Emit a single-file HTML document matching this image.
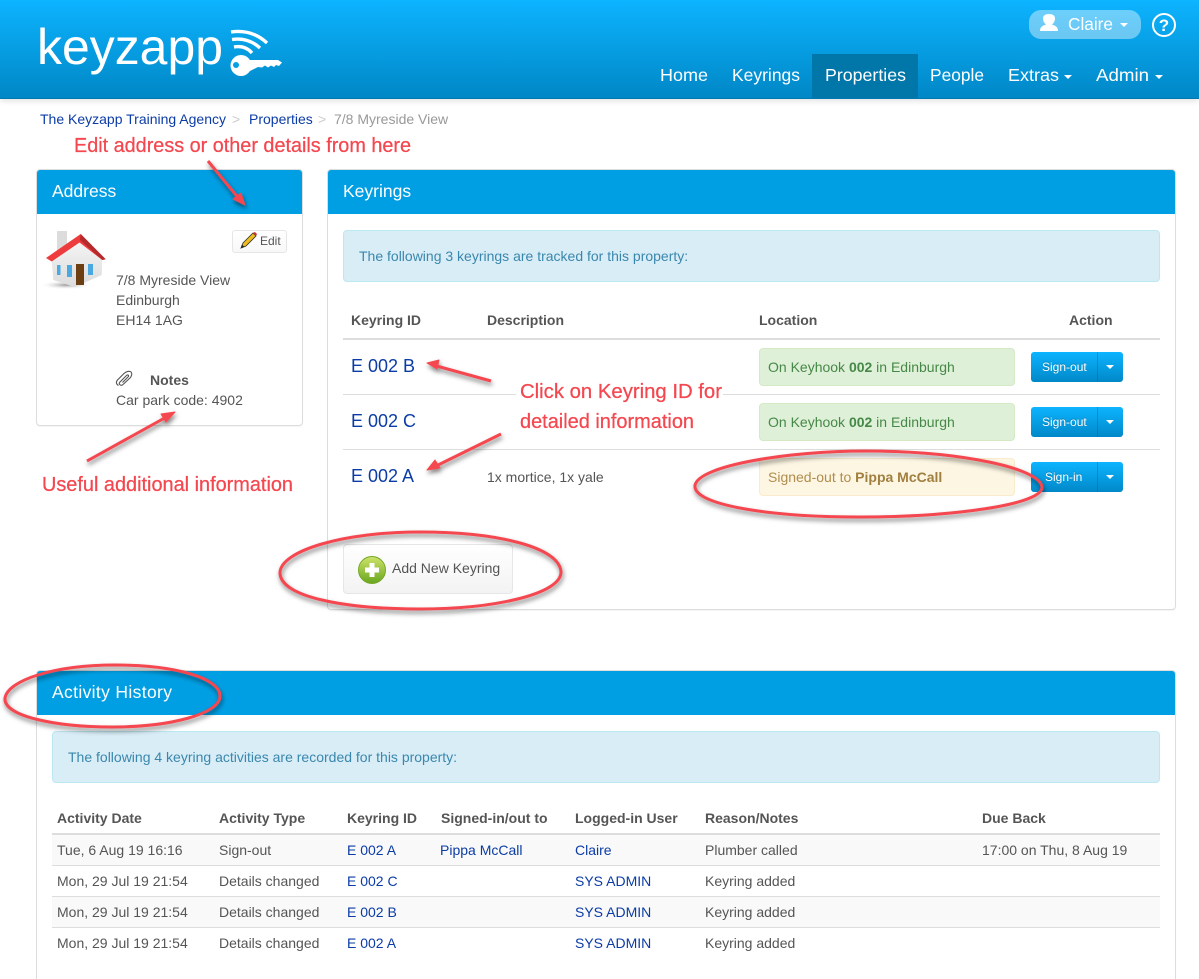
<!DOCTYPE html>
<html style="height:979px;overflow:hidden"><head><meta charset="utf-8"><title>Keyzapp</title>
<style>
html,body{margin:0;padding:0;background:#fff}
body{position:relative;width:1199px;height:979px;overflow:hidden;font-family:"Liberation Sans",sans-serif;font-size:14px;color:#555}
.a{position:absolute;box-sizing:border-box}
.t{position:absolute;white-space:nowrap;line-height:20px;margin-top:-10px}
.b{font-weight:bold}
.l{color:#0b3ca6}
.panel{position:absolute;box-sizing:border-box;background:#fff;border:1px solid #ddd;border-radius:4px;box-shadow:0 1px 1px rgba(0,0,0,.05)}
.head{position:absolute;box-sizing:border-box;background:#009fe3;color:#fff;font-size:17.5px;line-height:42px;padding-left:15px;height:44px}
.alert{position:absolute;box-sizing:border-box;background:#d9edf7;border:1px solid #bce8f1;border-radius:4px;color:#3a87ad;line-height:50px;padding-left:15px;height:52px}
.loc{position:absolute;box-sizing:border-box;left:759px;width:256px;height:38px;border-radius:4px;line-height:36px;padding-left:8px;border:1px solid #d6e9c6;background:#dff0d8;color:#468847}
.loc.w{border-color:#faebcc;background:#fdf6e3;color:#b08d4c}
.loc.w b{color:#a07f3f}
.btn{position:absolute;box-sizing:border-box;left:1031px;width:92px;height:30px;border-radius:3px;background:linear-gradient(#0db4ff,#0088c8);color:#fff;font-size:12px;line-height:30px;text-shadow:0 -1px 0 rgba(0,0,0,.2)}
.btn i{position:absolute;left:66px;top:0;width:1px;height:30px;background:rgba(0,90,140,.35)}
.btn u{position:absolute;left:75px;top:13px;width:0;height:0;border:4px solid transparent;border-top-color:#fff;border-bottom:0}
.line{position:absolute;height:1px;background:#ddd}
.row{position:absolute;left:52px;width:1108px;height:30px}
</style></head>
<body>

<!-- Header -->
<div class="a" style="left:0;top:0;width:1199px;height:99px;background:linear-gradient(#0db4ff,#0087c6);border-bottom:1px solid #0079b2;box-shadow:0 2px 6px rgba(0,0,0,.12)"></div>
<div class="a" style="left:812px;top:54px;width:106px;height:44px;background:#0076a9"></div>
<div class="a" style="left:1029px;top:10px;width:112px;height:29px;border-radius:12px;background:rgba(255,255,255,.4)"></div>

<svg class="a" style="left:0;top:0" width="1199" height="99" viewBox="0 0 1199 99">
  <text x="37" y="64" font-family="Liberation Sans" font-size="50" fill="#fff" textLength="186" lengthAdjust="spacingAndGlyphs">keyzapp</text>
  <g fill="none" stroke="#fff" stroke-width="3.4">
    <path d="M231 32 Q252 29 267 43"/>
    <path d="M232 39.500 Q248 37 260 48"/>
    <path d="M234 47 Q245 45 252 53"/>
  </g>
  <circle cx="241" cy="65.500" r="10.500" fill="#fff"/>
  <circle cx="236" cy="65" r="3" fill="#02a0e4"/>
  <path d="M250 60 H278 L282 62.500 L279 66 L276 65 L274 67 L271 65.500 L268 67.500 L265 65.500 L262 67.500 L258 67 L250 71 Z" fill="#fff"/>
  <g font-family="Liberation Sans" font-size="17.500" fill="#fff">
    <text x="660" y="81" textLength="48" lengthAdjust="spacingAndGlyphs">Home</text>
    <text x="732" y="81" textLength="68" lengthAdjust="spacingAndGlyphs">Keyrings</text>
    <text x="825" y="81" textLength="81" lengthAdjust="spacingAndGlyphs">Properties</text>
    <text x="930" y="81" textLength="54" lengthAdjust="spacingAndGlyphs">People</text>
    <text x="1008" y="81" textLength="51" lengthAdjust="spacingAndGlyphs">Extras</text>
    <text x="1096" y="81" textLength="53" lengthAdjust="spacingAndGlyphs">Admin</text>
    <text x="1068" y="30" textLength="45" lengthAdjust="spacingAndGlyphs">Claire</text>
  </g>
  <path d="M1064 75 h8 l-4 4z M1155 75 h8 l-4 4z M1120 23 h8 l-4 4z" fill="#fff"/>
  <path d="M1040 31 C1040 26 1044 25.500 1046 24.500 C1044 23 1043 21 1043 18.500 C1043 15.500 1045.500 14 1049 14 C1052.500 14 1055 15.500 1055 18.500 C1055 21 1054 23 1052 24.500 C1054 25.500 1058 26 1058 31 Z" fill="#fff"/>
  <circle cx="1164" cy="25" r="11" fill="none" stroke="#fff" stroke-width="2"/>
  <text x="1164" y="31" font-family="Liberation Sans" font-weight="bold" font-size="17" fill="#fff" text-anchor="middle">?</text>
</svg>

<!-- Breadcrumb -->
<span class="t l" style="left:40px;top:119px">The Keyzapp Training Agency</span>
<span class="t" style="left:232px;top:119px;color:#ccc">&gt;</span>
<span class="t l" style="left:249px;top:119px">Properties</span>
<span class="t" style="left:318px;top:119px;color:#ccc">&gt;</span>
<span class="t" style="left:334px;top:119px;color:#999">7/8 Myreside View</span>

<!-- Address panel -->
<div class="panel" style="left:36px;top:169px;width:267px;height:257px"></div>
<div class="head" style="left:37px;top:170px;width:265px;border-radius:3px 3px 0 0">Address</div>
<svg class="a" style="left:40px;top:228px" width="70" height="66" viewBox="40 228 70 66">
  <defs>
    <radialGradient id="sh"><stop offset="0" stop-color="#999"/><stop offset="1" stop-color="#fff" stop-opacity="0"/></radialGradient>
    <linearGradient id="wall" x1="0" y1="0" x2="0" y2="1"><stop offset="0" stop-color="#f4f4f4"/><stop offset="1" stop-color="#dcdcdc"/></linearGradient>
  </defs>
  <ellipse cx="66" cy="285" rx="26" ry="4.500" fill="url(#sh)"/>
  <rect x="57" y="231" width="10" height="20" fill="#dcdcdc"/>
  <path d="M51.700 261 L80 241.700 L102.300 260 L101.700 275 L75 287 L53.300 280 Z" fill="url(#wall)"/>
  <path d="M46 258 L80.700 234 L105.700 259.300 L102.300 260 L79.500 242.500 L51.700 261.500 Z" fill="#ee3b3e"/>
  <path d="M80.700 234 L105.700 259.300 L102.300 260 L80 240 Z" fill="#b52a2c"/>
  <rect x="57" y="265" width="3.500" height="10" fill="#49a9e0"/>
  <rect x="67" y="265" width="5" height="12" fill="#49a9e0"/>
  <rect x="88" y="264" width="5" height="11" fill="#49a9e0"/>
  <rect x="76" y="264" width="8" height="21" fill="#6b3f12"/>
</svg>
<div class="a" style="left:232px;top:230px;width:55px;height:23px;border:1px solid #e6e6e6;border-radius:3px;background:linear-gradient(#fff,#f8f8f8)"></div>
<svg class="a" style="left:238px;top:231px" width="20" height="20" viewBox="0 0 20 20">
  <path d="M3 17 L5 12 L15 2 L18 5 L8 15 Z" fill="#eebc1d" stroke="#333" stroke-width=".8"/>
  <path d="M15 2 L18 5 L19 3 L17 1 Z" fill="#c33"/>
  <path d="M3 17 L4 13.500 L6.500 16Z" fill="#222"/>
</svg>
<span class="t" style="left:260px;top:241px;font-size:12px">Edit</span>
<span class="t" style="left:116px;top:280px">7/8 Myreside View</span>
<span class="t" style="left:116px;top:300px">Edinburgh</span>
<span class="t" style="left:116px;top:320px">EH14 1AG</span>
<svg class="a" style="left:115px;top:370px" width="18" height="17" viewBox="0 0 18 17">
  <path d="M3.500 15.500 C1.500 14.500 .5 12.500 2.500 10 L9 3.500 C11 1.500 14.500 .5 16 2 C17.500 3.500 16.500 6.500 15 8 L8 14.500 C6.500 16 3.500 15 4.500 12.500 L11.500 5.500 C12.500 4.500 14 5 13.500 6.500 L7.500 12.500" fill="none" stroke="#555" stroke-width="1.100"/>
</svg>
<span class="t b" style="left:150px;top:380px">Notes</span>
<span class="t" style="left:116px;top:400px">Car park code: 4902</span>

<!-- Keyrings panel -->
<div class="panel" style="left:327px;top:169px;width:849px;height:441px"></div>
<div class="head" style="left:328px;top:170px;width:847px;border-radius:3px 3px 0 0">Keyrings</div>
<div class="alert" style="left:343px;top:230px;width:817px">The following 3 keyrings are tracked for this property:</div>
<span class="t b" style="left:351px;top:320px">Keyring ID</span>
<span class="t b" style="left:487px;top:320px">Description</span>
<span class="t b" style="left:759px;top:320px">Location</span>
<span class="t b" style="left:1069px;top:320px">Action</span>
<div class="line" style="left:343px;top:338px;width:817px;height:2px"></div>
<div class="line" style="left:343px;top:394px;width:817px"></div>
<div class="line" style="left:343px;top:449px;width:817px"></div>
<span class="t l" style="left:351px;top:366px;font-size:18px">E 002 B</span>
<span class="t l" style="left:351px;top:421px;font-size:18px">E 002 C</span>
<span class="t l" style="left:351px;top:476px;font-size:18px">E 002 A</span>
<span class="t" style="left:487px;top:477px">1x mortice, 1x yale</span>
<div class="loc" style="top:348px">On Keyhook <b>002</b> in Edinburgh</div>
<div class="loc" style="top:403px">On Keyhook <b>002</b> in Edinburgh</div>
<div class="loc w" style="top:458px">Signed-out to <b>Pippa McCall</b></div>
<div class="btn" style="top:352px"><span style="position:absolute;left:11px">Sign-out</span><i></i><u></u></div>
<div class="btn" style="top:407px"><span style="position:absolute;left:11px">Sign-out</span><i></i><u></u></div>
<div class="btn" style="top:462px"><span style="position:absolute;left:14px">Sign-in</span><i></i><u></u></div>

<div class="a" style="left:343px;top:544px;width:170px;height:50px;border:1px solid #e6e6e6;border-radius:4px;background:linear-gradient(#fff,#f3f3f3)"></div>
<svg class="a" style="left:357px;top:555px" width="30" height="30" viewBox="0 0 30 30">
  <defs><linearGradient id="g" x1="0" y1="0" x2="0" y2="1"><stop offset="0" stop-color="#cfe36a"/><stop offset="1" stop-color="#68a61f"/></linearGradient></defs>
  <circle cx="15" cy="15" r="13.500" fill="url(#g)" stroke="#74a828" stroke-width="1"/>
  <path d="M12.500 8 h5 v4.500 h4.500 v5 h-4.500 v4.500 h-5 v-4.500 h-4.500 v-5 h4.500 z" fill="#fff"/>
</svg>
<span class="t" style="left:392px;top:568px">Add New Keyring</span>

<!-- Activity panel -->
<div class="panel" style="left:36px;top:670px;width:1140px;height:309px;border-bottom:0;border-radius:4px 4px 0 0"></div>
<div class="head" style="left:37px;top:671px;width:1138px;border-radius:3px 3px 0 0;letter-spacing:.35px">Activity History</div>
<div class="alert" style="left:52px;top:731px;width:1108px">The following 4 keyring activities are recorded for this property:</div>

<span class="t b" style="left:57px;top:818px">Activity Date</span>
<span class="t b" style="left:219px;top:818px">Activity Type</span>
<span class="t b" style="left:347px;top:818px">Keyring ID</span>
<span class="t b" style="left:441px;top:818px">Signed-in/out to</span>
<span class="t b" style="left:575px;top:818px">Logged-in User</span>
<span class="t b" style="left:705px;top:818px">Reason/Notes</span>
<span class="t b" style="left:982px;top:818px">Due Back</span>

<div class="row" style="top:835px;background:#f9f9f9"></div>
<div class="row" style="top:897px;background:#f9f9f9"></div>
<div class="line" style="left:52px;top:833px;width:1108px;height:2px"></div>
<div class="line" style="left:52px;top:865px;width:1108px"></div>
<div class="line" style="left:52px;top:896px;width:1108px"></div>
<div class="line" style="left:52px;top:927px;width:1108px"></div>

<span class="t" style="left:57px;top:850px">Tue, 6 Aug 19 16:16</span>
<span class="t" style="left:219px;top:850px">Sign-out</span>
<span class="t l" style="left:347px;top:850px">E 002 A</span>
<span class="t l" style="left:440px;top:850px">Pippa McCall</span>
<span class="t l" style="left:575px;top:850px">Claire</span>
<span class="t" style="left:705px;top:850px">Plumber called</span>
<span class="t" style="left:982px;top:850px">17:00 on Thu, 8 Aug 19</span>

<span class="t" style="left:57px;top:881px">Mon, 29 Jul 19 21:54</span>
<span class="t" style="left:219px;top:881px">Details changed</span>
<span class="t l" style="left:347px;top:881px">E 002 C</span>
<span class="t l" style="left:575px;top:881px">SYS ADMIN</span>
<span class="t" style="left:705px;top:881px">Keyring added</span>

<span class="t" style="left:57px;top:912px">Mon, 29 Jul 19 21:54</span>
<span class="t" style="left:219px;top:912px">Details changed</span>
<span class="t l" style="left:347px;top:912px">E 002 B</span>
<span class="t l" style="left:575px;top:912px">SYS ADMIN</span>
<span class="t" style="left:705px;top:912px">Keyring added</span>

<span class="t" style="left:57px;top:943px">Mon, 29 Jul 19 21:54</span>
<span class="t" style="left:219px;top:943px">Details changed</span>
<span class="t l" style="left:347px;top:943px">E 002 A</span>
<span class="t l" style="left:575px;top:943px">SYS ADMIN</span>
<span class="t" style="left:705px;top:943px">Keyring added</span>

<!-- Annotations -->
<svg class="a" style="left:0;top:0" width="1199" height="979" viewBox="0 0 1199 979">
  <defs><filter id="s" x="-20%" y="-40%" width="140%" height="190%"><feDropShadow dx="1" dy="3" stdDeviation="2.500" flood-color="#000" flood-opacity=".5"/></filter></defs>
  <rect x="516" y="380" width="207" height="28" fill="#fff"/>
  <g font-family="Liberation Sans" font-size="20" fill="#f4474f" stroke="#f4474f" stroke-width=".25">
    <text x="74" y="152" textLength="337" lengthAdjust="spacingAndGlyphs">Edit address or other details from here</text>
    <text x="42" y="491" textLength="251" lengthAdjust="spacingAndGlyphs">Useful additional information</text>
    <text x="520" y="398" textLength="202" lengthAdjust="spacingAndGlyphs">Click on Keyring ID for</text>
    <text x="520" y="428" textLength="174" lengthAdjust="spacingAndGlyphs">detailed information</text>
  </g>
  <g filter="url(#s)" fill="#f4474f" stroke="#f4474f" stroke-linejoin="round">
    <path d="M208 161 L240 200" stroke-width="3"/><path d="M245 205 L233 199 L241 193Z" stroke-width="1"/>
    <path d="M87 461 L170 415" stroke-width="3"/><path d="M175 412 L166 422 L161 414Z" stroke-width="1"/>
    <path d="M491 381 L433 365" stroke-width="3"/><path d="M427 363 L439 360 L437 369Z" stroke-width="1"/>
    <path d="M501 434 L432 468" stroke-width="3"/><path d="M427 470 L435 460 L440 468Z" stroke-width="1"/>
  </g>
  <g filter="url(#s)" fill="none" stroke="#f4474f" stroke-width="3">
    <path d="M695 485 C700 465 790 451 865 451 C960 451 1040 468 1042 487 C1043 505 950 517 860 517 C770 517 692 505 695 485 Z"/>
    <path d="M280 572 C282 550 345 532 420 532 C500 532 560 548 561 572 C561 594 495 609 420 609 C345 609 279 597 280 572 Z"/>
    <path d="M5 698 C8 680 55 665 115 665 C175 665 220 678 220 696 C220 714 170 727 112 727 C55 727 3 716 5 698 Z"/>
  </g>
</svg>
</body></html>
